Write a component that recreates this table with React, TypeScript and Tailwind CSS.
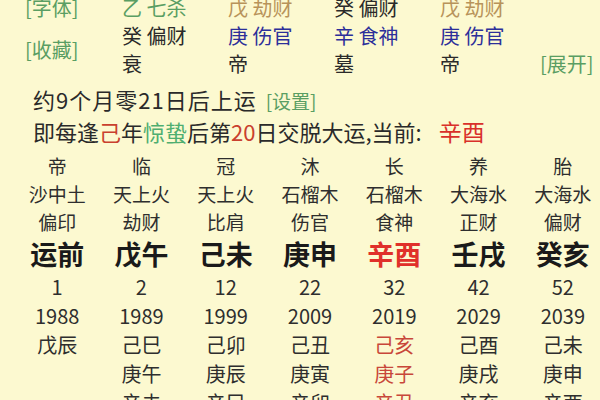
const green = 'text-[#5a9e63]';
const brown = 'text-[#b8935a]';
const blue = 'text-[#2c2f9a]';
const dark = 'text-[#2a2a2a]';

type Cell = { t: string; c: string };

const pillars: Cell[][] = [
  [{ t: '乙 七杀', c: green }, { t: '戊 劫财', c: brown }, { t: '癸 偏财', c: dark }, { t: '戊 劫财', c: brown }],
  [{ t: '癸 偏财', c: dark }, { t: '庚 伤官', c: blue }, { t: '辛 食神', c: blue }, { t: '庚 伤官', c: blue }],
  [{ t: '衰', c: dark }, { t: '帝', c: dark }, { t: '墓', c: dark }, { t: '帝', c: dark }],
];

type Col = {
  stage: string;
  nayin: string;
  god: string;
  gz: string;
  age: string;
  year: string;
  years: string[];
  current?: boolean;
};

const cols: Col[] = [
  { stage: '帝', nayin: '沙中土', god: '偏印', gz: '运前', age: '1', year: '1988', years: ['戊辰'] },
  { stage: '临', nayin: '天上火', god: '劫财', gz: '戊午', age: '2', year: '1989', years: ['己巳', '庚午', '辛未'] },
  { stage: '冠', nayin: '天上火', god: '比肩', gz: '己未', age: '12', year: '1999', years: ['己卯', '庚辰', '辛巳'] },
  { stage: '沐', nayin: '石榴木', god: '伤官', gz: '庚申', age: '22', year: '2009', years: ['己丑', '庚寅', '辛卯'] },
  { stage: '长', nayin: '石榴木', god: '食神', gz: '辛酉', age: '32', year: '2019', years: ['己亥', '庚子', '辛丑'], current: true },
  { stage: '养', nayin: '大海水', god: '正财', gz: '壬戌', age: '42', year: '2029', years: ['己酉', '庚戌', '辛亥'] },
  { stage: '胎', nayin: '大海水', god: '偏财', gz: '癸亥', age: '52', year: '2039', years: ['己未', '庚申', '辛酉'] },
];

export default function App() {
  return (
    <div
      className="w-[600px] h-[400px] overflow-hidden bg-[#fcf9d0] text-[#2a2a2a]"
      style={{ fontFamily: '"Noto Sans CJK SC", "Noto Sans", sans-serif' }}
    >
      {/* pillar block */}
      <div className="grid grid-cols-[97px_106px_106px_106px_100px_1fr] pl-[25px] mt-[-6px] text-[20px] leading-[28px]">
        <div className={green}>[字体]</div>
        {pillars[0].map((c, i) => (
          <div key={i} className={c.c}>{c.t}</div>
        ))}
        <div />
        <div className={`${green} row-span-2 flex items-center`}>[收藏]</div>
        {pillars[1].map((c, i) => (
          <div key={i} className={c.c}>{c.t}</div>
        ))}
        <div />
        {pillars[2].map((c, i) => (
          <div key={i} className={c.c}>{c.t}</div>
        ))}
        <div className={green}>[展开]</div>
      </div>

      {/* start of luck */}
      <div className="pl-[33px] mt-[6px] text-[22px] leading-[30px]">
        <div>
          <span className="tracking-[1px]">约9个月零21日后上运</span>
          <span className={`${green} text-[19px] ml-[9px]`}>[设置]</span>
        </div>
        <div>
          即每逢<span className="text-[#c9402e]">己</span>年<span className="text-[#4fae70]">惊蛰</span>后第
          <span className="text-[#c9402e]">20</span>日交脱大运,当前: <span className="text-[#d9302a] text-[23px] ml-[12px]">辛酉</span>
        </div>
      </div>

      {/* luck pillars */}
      <div className="grid grid-cols-7 w-[590px] ml-[15px] mt-[6px] text-center">
        {cols.map((c) => (
          <div key={c.age} className="flex flex-col">
            <div className="text-[19px] leading-[28px] text-[#2e2e2e]">{c.stage}</div>
            <div className="text-[19px] leading-[28px] text-[#2e2e2e]">{c.nayin}</div>
            <div className="text-[19px] leading-[28px] text-[#2e2e2e]">{c.god}</div>
            <div className={`text-[27px] leading-[36px] font-bold ${c.current ? 'text-[#e0302a]' : 'text-[#1a1a1a]'}`}>{c.gz}</div>
            <div className="text-[20px] leading-[29px] text-[#2e2e2e]">{c.age}</div>
            <div className="text-[20px] leading-[29px] text-[#2e2e2e]">{c.year}</div>
            {c.years.map((y) => (
              <div key={y} className={`text-[20px] leading-[29px] ${c.current ? 'text-[#c8473a]' : 'text-[#2e2e2e]'}`}>{y}</div>
            ))}
          </div>
        ))}
      </div>
    </div>
  );
}
